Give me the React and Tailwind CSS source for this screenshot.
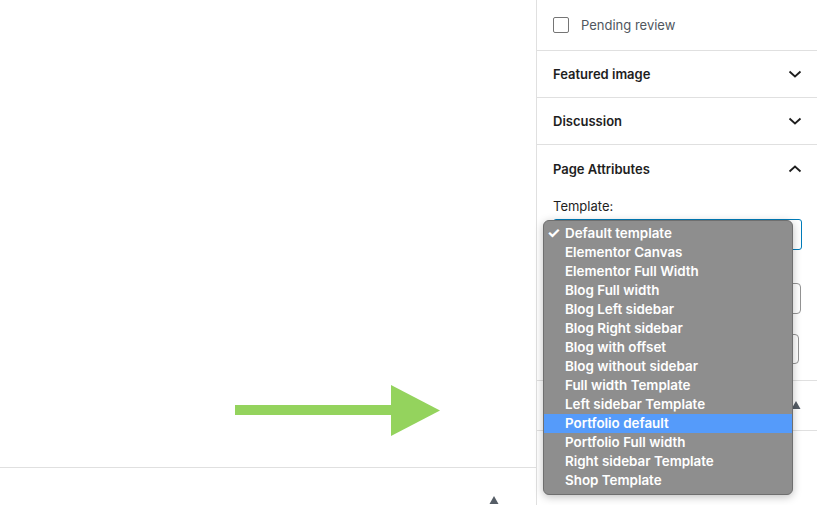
import React from "react";

const items = [
  "Default template",
  "Elementor Canvas",
  "Elementor Full Width",
  "Blog Full width",
  "Blog Left sidebar",
  "Blog Right sidebar",
  "Blog with offset",
  "Blog without sidebar",
  "Full width Template",
  "Left sidebar Template",
  "Portfolio default",
  "Portfolio Full width",
  "Right sidebar Template",
  "Shop Template",
];

function Chevron({ up }) {
  return (
    <svg width="24" height="24" viewBox="0 0 24 24" className="text-[#1e1e1e]">
      {up ? (
        <path d="M6.5 14.5l5.5-5 5.5 5" fill="none" stroke="currentColor" strokeWidth="1.8" />
      ) : (
        <path d="M6.5 9.5l5.5 5 5.5-5" fill="none" stroke="currentColor" strokeWidth="1.8" />
      )}
    </svg>
  );
}

function PanelHeader({ title, up }) {
  return (
    <div className="h-[47px] flex items-center justify-between pl-4 pr-[10px] border-b border-[#e0e0e0]">
      <span className="text-[13px] font-semibold text-[#1e1e1e] pt-[2px]">{title}</span>
      <Chevron up={up} />
    </div>
  );
}

export default function App() {
  return (
    <div
      className="relative w-[817px] h-[505px] overflow-hidden bg-white flex"
      style={{ fontFamily: "Inter, 'Noto Sans', sans-serif" }}
    >
      {/* main content */}
      <div className="w-[536px] h-full flex flex-col">
        <div className="h-[467px] shrink-0 relative">
          <svg
            className="absolute left-[235px] top-[385px]"
            width="206"
            height="51"
            viewBox="0 0 206 51"
          >
            <rect x="0" y="20" width="158" height="10" fill="#94d35d" />
            <polygon points="156,0 205,25.5 156,51" fill="#94d35d" />
          </svg>
        </div>
        <div className="flex-1 border-t border-[#e0e0e0] flex justify-end pr-[37px] pt-[28px]">
          <svg width="10" height="10" viewBox="0 0 10 10">
            <polygon points="5,0 9.5,8 0.5,8" fill="#555d66" />
          </svg>
        </div>
      </div>

      {/* sidebar */}
      <div className="w-[281px] h-full border-l border-[#e0e0e0] flex flex-col">
        <div className="h-[51px] flex items-center pl-4 gap-3 border-b border-[#e0e0e0]">
          <div className="w-4 h-4 border-[1.5px] border-[#757575] rounded-[2px]" />
          <span className="text-[13px] text-[#50575e] pt-[2px]">Pending review</span>
        </div>
        <PanelHeader title="Featured image" />
        <PanelHeader title="Discussion" />
        <div className="border-b border-[#e0e0e0] pb-4">
          <div className="h-[47px] flex items-center justify-between pl-4 pr-[10px]">
            <span className="text-[13px] font-semibold text-[#1e1e1e] pt-[2px]">Page Attributes</span>
            <Chevron up />
          </div>
          <div className="pl-4 pr-[15px]">
            <div className="text-[13px] text-[#1e1e1e] leading-4 mt-[6px]">Template:</div>
            <div className="mt-[5px] h-[31px] border-[1.5px] border-[#007cba] rounded-[3px]" />
            <div className="mt-[33px] h-[31px] border border-[#949494] rounded-[4px] mr-[1px]" />
            <div className="mt-[20px] h-[30px] border border-[#949494] rounded-[4px] mr-[3px]" />
          </div>
        </div>
        <div className="h-[50px] flex items-center justify-end pr-[16px] border-b border-[#e0e0e0]">
          <svg width="10" height="10" viewBox="0 0 10 10">
            <polygon points="5,0 9.5,8 0.5,8" fill="#555d66" />
          </svg>
        </div>
      </div>

      {/* native select dropdown overlay */}
      <div className="absolute left-[543px] top-[220px] w-[250px] h-[275px] rounded-[6px] bg-[#8e8e8e] border border-[#6f6f6f] shadow-[0_2px_8px_rgba(0,0,0,0.25)] pt-[3px]">
        {items.map((it, i) => (
          <div
            key={it}
            className={
              "relative h-[19px] flex items-center pl-[21px] text-[13.4px] font-semibold text-white leading-none " +
              (it === "Portfolio default" ? "bg-[#559bfa]" : "")
            }
          >
            {i === 0 && (
              <span className="absolute left-[3px] top-[1px] text-[15px] font-bold">✓</span>
            )}
            {it}
          </div>
        ))}
      </div>
    </div>
  );
}
